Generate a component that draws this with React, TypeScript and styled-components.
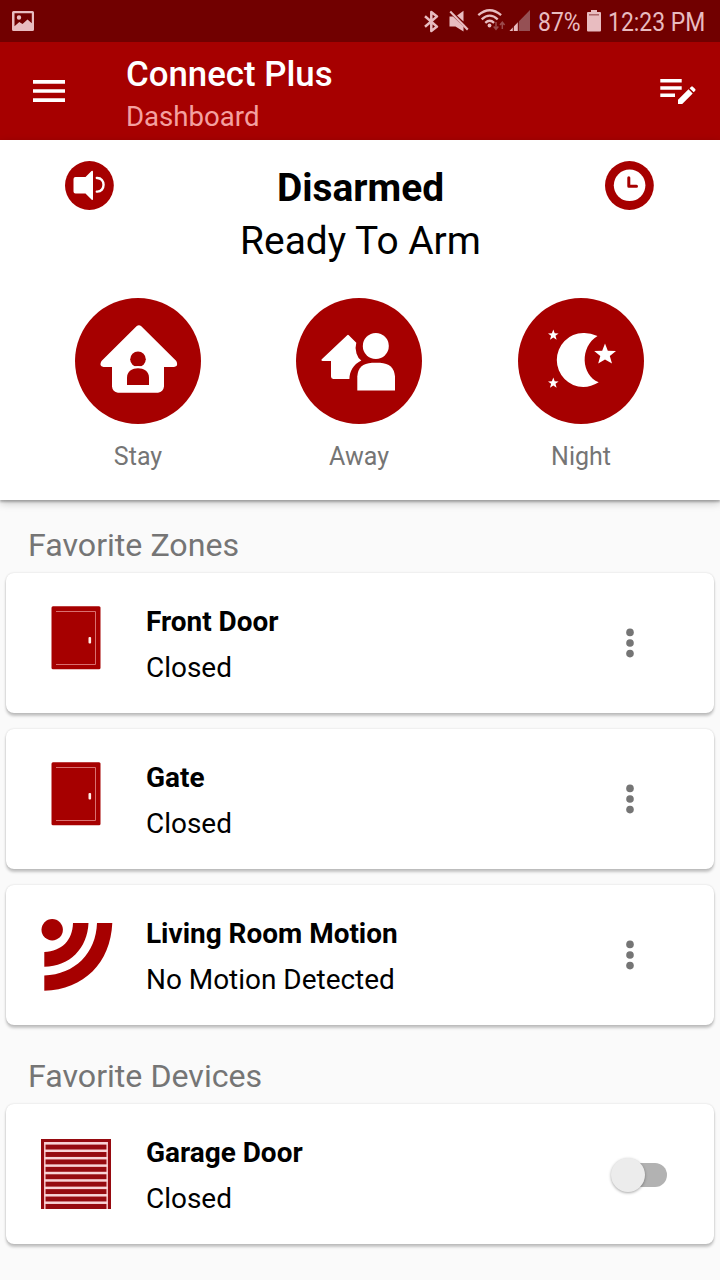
import React from "react";
import styled, { createGlobalStyle } from "styled-components";

const RED = "#a60000";

const GlobalStyle = createGlobalStyle`
  * { box-sizing: border-box; }
  body {
    margin: 0;
    background: #fafafa;
    font-family: Roboto, "Liberation Sans", sans-serif;
    color: #000;
  }
  svg { display: block; flex: none; }
`;

const Screen = styled.div`
  width: 720px;
  height: 1280px;
  overflow: hidden;
  display: flex;
  flex-direction: column;
`;

const StatusBar = styled.div`
  height: 42px;
  flex: none;
  display: flex;
  align-items: center;
  padding: 0 14px 0 12px;
  background: #710000;
`;

const StatusIcons = styled.div`
  display: flex;
  align-items: center;
  margin-left: auto;
`;

const StatusText = styled.span<{ $width: number }>`
  width: ${(p) => p.$width}px;
  font-size: 26px;
  line-height: 42px;
  white-space: nowrap;
  color: #e8bcc0;
  transform: translateY(1px) scaleX(0.882);
  transform-origin: left center;
`;

const AppBar = styled.header`
  height: 98px;
  flex: none;
  display: flex;
  align-items: center;
  padding: 0 24px 0 33px;
  background: ${RED};
`;

const Titles = styled.div`
  margin-left: 61px;
  flex: 1;
  padding-top: 9px;
`;

const Title = styled.h1`
  margin: 0;
  font-size: 34.8px;
  line-height: 41px;
  font-weight: 500;
  color: #fff;
`;

const Subtitle = styled.div`
  font-size: 27.6px;
  line-height: 43px;
  color: #f4a0a0;
`;

const Panel = styled.section`
  position: relative;
  height: 360px;
  flex: none;
  background: #fff;
  box-shadow: 0 2px 2px rgba(0, 0, 0, 0.24), 0 3px 8px rgba(0, 0, 0, 0.22);
`;

const StateRow = styled.div`
  display: flex;
  justify-content: space-between;
  align-items: flex-start;
  height: 158px;
  padding: 21px 66px 0 65px;
`;

const StateText = styled.div`
  padding-left: 2px;
  text-align: center;
  font-size: 38.9px;
  line-height: 53px;
`;

const Strong = styled.div`
  font-weight: 700;
`;

const Modes = styled.div`
  display: flex;
  gap: 95px;
  padding-left: 75px;
`;

const Mode = styled.div`
  width: 126px;
  display: flex;
  flex-direction: column;
  align-items: center;
  gap: 18px;

  &:last-child {
    margin-left: 1px;
  }
`;

const ModeLabel = styled.span`
  font-size: 25px;
  line-height: 30px;
  color: #757575;
`;

const SectionTitle = styled.h2<{ $top: number; $gap: number }>`
  margin: ${(p) => p.$top}px 0 ${(p) => p.$gap}px 28px;
  font-size: 32.15px;
  line-height: 38px;
  font-weight: 400;
  color: #757575;
`;

const CardList = styled.div`
  display: flex;
  flex-direction: column;
  gap: 16px;
  padding: 0 6px;
`;

const Card = styled.article`
  height: 140px;
  display: flex;
  padding-right: 46px;
  background: #fff;
  border-radius: 8px;
  box-shadow: 0 0 2px rgba(0, 0, 0, 0.16), 0 3px 3px rgba(0, 0, 0, 0.22);
`;

const CardIcon = styled.div`
  width: 140px;
  flex: none;
`;

const CardBody = styled.div`
  flex: 1;
  padding-top: 26px;
  font-size: 27.95px;
  line-height: 46px;
`;

const CardAction = styled.div`
  width: 76px;
  display: flex;
  align-items: center;
  justify-content: center;
`;

const Switch = styled.div`
  width: 57px;
  height: 36px;
  display: flex;
  align-items: center;
  margin-top: 2px;
  margin-right: -17px;
`;

const Thumb = styled.div`
  position: relative;
  width: 34px;
  height: 34px;
  margin-left: 1px;
  border-radius: 50%;
  background: #ececec;
  box-shadow: 0 1px 3px rgba(0, 0, 0, 0.35);
`;

const Track = styled.div`
  width: 40px;
  height: 24px;
  margin-left: -18px;
  border-radius: 12px;
  background: #b2b2b2;
`;

const TINT = "#e8bcc0";

const PhotoIcon = () => (
  <svg width="22" height="20" viewBox="0 0 22 20">
    <path
      fill={TINT}
      fillRule="evenodd"
      d="M1.5 0H20.5Q22 0 22 1.5V18.5Q22 20 20.5 20H1.5Q0 20 0 18.5V1.5Q0 0 1.5 0ZM2.5 2.2V15.3L7.3 11L10.5 13L15.5 8.5L19.8 12.2V2.2ZM7 4.3A2.2 2.2 0 1 1 7 8.7A2.2 2.2 0 1 1 7 4.3Z"
    />
  </svg>
);

const StatusGlyphs = () => (
  <svg width="108" height="24" viewBox="423 9 108 24">
    <path
      d="M425 16.3L437 26.6L431.3 31V12L437 16.4L425 26.8"
      fill="none"
      stroke={TINT}
      strokeWidth="2.5"
      strokeLinejoin="round"
    />
    <g fill={TINT}>
      <path d="M449.5 16.5H453L463.5 26.5V31.5L455.5 26.5H449.5Z" />
      <path d="M457 15.5L463.5 10.8V21.5Z" />
      <path d="M449.5 12.3L451 10.8L468.5 28.8L467 30.5Z" />
    </g>
    <g fill="none" stroke={TINT} strokeWidth="2.3">
      <path d="M478.3 15.2Q489.7 5.4 501.1 15.2" />
      <path d="M481.7 19.3Q489.7 12 497.7 19.3" />
      <path d="M485.3 22.8Q489.7 18.8 494.1 22.8" />
    </g>
    <circle cx="489.5" cy="25.5" r="1.9" fill={TINT} />
    <g fill="none" stroke="#9b4a4c" strokeWidth="1.5">
      <path d="M496 22V29M493.7 26.5L496 29.3L498.3 26.5" />
      <path d="M502.3 29V22.5M500 25L502.3 22.2L504.6 25" />
    </g>
    <path d="M530 10V31H509.5Z" fill="#955054" />
    <path d="M518 22.3V31H509.5Z" fill={TINT} />
    <path d="M513.3 24V31M518.3 20V31" stroke="#710000" strokeWidth="1" />
  </svg>
);

const BatteryIcon = () => (
  <svg width="14" height="22" viewBox="0 0 14 22">
    <path d="M4 0H10V2H13Q14 2 14 3V20.5Q14 21.5 13 21.5H1Q0 21.5 0 20.5V3Q0 2 1 2H4Z" fill={TINT} />
    <path d="M2 4.8H12" stroke="#a65f62" strokeWidth="1.4" />
  </svg>
);

const MenuIcon = () => (
  <svg width="32" height="22" viewBox="0 0 32 22">
    <path d="M0 1.9H32M0 11H32M0 20.1H32" stroke="#fff" strokeWidth="3.6" />
  </svg>
);

const EditNoteIcon = () => (
  <svg width="36" height="26" viewBox="660 79 36 26">
    <path d="M660.3 81.7H681.7M660.3 89H681.7M660.3 96.3H675" stroke="#fff" strokeWidth="3.5" />
    <path
      fill="#fff"
      d="M678 105V100.8L688.5 90.3L692.7 94.5L682.2 105ZM689.6 89.2L691.2 87.7Q692 87 692.8 87.7L695.2 90.1Q695.9 90.9 695.2 91.7L693.7 93.3Z"
    />
  </svg>
);

const SoundIcon = () => (
  <svg width="49" height="49" viewBox="65 161 49 49">
    <circle cx="89.4" cy="185.5" r="24.4" fill={RED} />
    <path
      fill="#fff"
      d="M75.5 177H85.5L91.5 171Q93 170 93 172V198.5Q93 201 91.5 199.5L85.5 193.5H75.5Q73.5 193.5 73.5 191.5V179Q73.5 177 75.5 177Z"
    />
    <path
      d="M96.8 178C105.8 177.5 105.8 192.2 96.8 191.6"
      fill="none"
      stroke="#fff"
      strokeWidth="2.4"
      strokeLinecap="round"
    />
  </svg>
);

const ClockIcon = () => (
  <svg width="49" height="49" viewBox="605 161 49 49">
    <circle cx="629.4" cy="185.5" r="24.4" fill={RED} />
    <circle cx="629.6" cy="185.3" r="15.8" fill="#fff" />
    <path
      d="M628.8 177.8V186.3H636.5"
      fill="none"
      stroke={RED}
      strokeWidth="3"
      strokeLinecap="round"
      strokeLinejoin="round"
    />
  </svg>
);

const StayIcon = () => (
  <svg width="126" height="126" viewBox="75 298 126 126">
    <circle cx="138" cy="361" r="63" fill={RED} />
    <path
      fill="#fff"
      d="M136.5 326.3Q139 324.3 141.3 326.3L176.3 361Q179 366.3 174 367H164V386.5Q163.3 392 158 392.7H118Q112.5 392 112 386.5V367H103.5Q98.5 366 101.5 361Z"
    />
    <circle cx="138" cy="359.3" r="7.8" fill={RED} />
    <path fill={RED} d="M127 385V377.5C127 365.3 149 365.3 149 377.5V385Z" />
    <path d="M131.5 368Q138 365.5 144.5 368" fill="none" stroke="#fff" strokeWidth="1.5" />
  </svg>
);

const AwayIcon = () => (
  <svg width="126" height="126" viewBox="296 298 126 126">
    <circle cx="359" cy="361" r="63" fill={RED} />
    <path
      fill="#fff"
      d="M347.2 335.2L321.5 359.5Q321 361 323 361H331V376.5Q331 378.7 333.3 379H349.4C349.6 371.5 353 364.5 361.3 360.5Q357.8 358 356.5 353.5Q354.7 348 356.3 342.8L348.8 335.2Q348 334.3 347.2 335.2Z"
    />
    <circle cx="375.8" cy="346" r="13" fill="#fff" />
    <path
      fill="#fff"
      d="M357.3 390.6V376.5Q358 363.5 372 362.7H380Q394 363.5 395 376.5V390.6Z"
    />
  </svg>
);

const NightIcon = () => (
  <svg width="126" height="126" viewBox="518 298 126 126">
    <circle cx="581" cy="361" r="63" fill={RED} />
    <path
      fill="#fff"
      d="M597.5 336Q590 332.7 583.3 333A26.5 27 0 0 0 583.3 387Q591 387 598.7 382.3C581 375 579.5 347 597.5 336Z"
    />
    <path
      fill="#fff"
      d="M605 343.5L607.8 350.7L616 351L609.8 356L612 363.5L605 359.4L598.2 363.5L600.3 356L594.2 351L602.2 350.7Z"
    />
    <g fill="#fff">
      <path
        id="small-star"
        d="M553.3 329.5L554.7 333.2L558.6 333.4L555.5 335.8L556.6 339.7L553.3 337.5L550 339.7L551.1 335.8L548 333.4L551.9 333.2Z"
      />
      <use href="#small-star" y="48" />
    </g>
  </svg>
);

const DoorIcon = () => (
  <svg width="140" height="140" viewBox="6 573 140 140">
    <rect x="51.5" y="606.3" width="49" height="63" rx="1.5" fill={RED} />
    <path d="M56 611.5H95.5V664.5H56" fill="none" stroke="#d97070" strokeWidth="1" />
    <rect x="88.5" y="637" width="2.6" height="6.6" rx="1" fill="#fff0e8" />
  </svg>
);

const MotionIcon = () => (
  <svg width="140" height="140" viewBox="6 885 140 140">
    <circle cx="52.2" cy="929.8" r="10.7" fill={RED} />
    <g fill={RED}>
      <path d="M73 923H88.5C87.5 948 70 966.5 44.3 966.8V952C62 951 72.5 940.5 73 923Z" />
      <path d="M97 923H112.3C110.5 963 84 989.5 44.3 990.8V975.5C75 974.5 96 953 97 923Z" />
    </g>
  </svg>
);

const GarageIcon = () => (
  <svg width="140" height="140" viewBox="6 1104 140 140">
    <rect x="41" y="1139" width="70" height="70" fill="#960a10" />
    <path d="M44.8 1209V1142.9H107.2V1209" fill="none" stroke="#f3b9bd" strokeWidth="1.6" />
    {[0, 1, 2, 3, 4, 5, 6, 7, 8].map((i) => (
      <rect key={i} x="44.5" y={1142.1 + i * 7.42} width="63" height="2.5" fill="#f8d3d6" />
    ))}
  </svg>
);

const MoreIcon = () => (
  <svg width="8" height="30" viewBox="0 0 8 30" fill="#757575">
    <circle cx="4" cy="4.4" r="3.8" />
    <circle cx="4" cy="15" r="3.8" />
    <circle cx="4" cy="25.6" r="3.8" />
  </svg>
);

const modes = [
  { label: "Stay", icon: <StayIcon /> },
  { label: "Away", icon: <AwayIcon /> },
  { label: "Night", icon: <NightIcon /> },
];

const zones = [
  { name: "Front Door", status: "Closed", icon: <DoorIcon /> },
  { name: "Gate", status: "Closed", icon: <DoorIcon /> },
  { name: "Living Room Motion", status: "No Motion Detected", icon: <MotionIcon /> },
];

interface ItemCardProps {
  name: string;
  status: string;
  icon: React.ReactNode;
  children: React.ReactNode;
}

const ItemCard = ({ name, status, icon, children }: ItemCardProps) => (
  <Card>
    <CardIcon>{icon}</CardIcon>
    <CardBody>
      <Strong>{name}</Strong>
      <div>{status}</div>
    </CardBody>
    <CardAction>{children}</CardAction>
  </Card>
);

const BatteryGap = styled.div`
  margin: 0 7px 0 6px;
`;

const GlyphGap = styled.div`
  margin-right: 7px;
`;

export default function App() {
  return (
    <Screen>
      <GlobalStyle />
      <StatusBar>
        <PhotoIcon />
        <StatusIcons>
          <GlyphGap>
            <StatusGlyphs />
          </GlyphGap>
          <StatusText $width={43}>87%</StatusText>
          <BatteryGap>
            <BatteryIcon />
          </BatteryGap>
          <StatusText $width={98}>12:23 PM</StatusText>
        </StatusIcons>
      </StatusBar>
      <AppBar>
        <MenuIcon />
        <Titles>
          <Title>Connect Plus</Title>
          <Subtitle>Dashboard</Subtitle>
        </Titles>
        <EditNoteIcon />
      </AppBar>
      <Panel>
        <StateRow>
          <SoundIcon />
          <StateText>
            <Strong>Disarmed</Strong>
            <div>Ready To Arm</div>
          </StateText>
          <ClockIcon />
        </StateRow>
        <Modes>
          {modes.map((m) => (
            <Mode key={m.label}>
              {m.icon}
              <ModeLabel>{m.label}</ModeLabel>
            </Mode>
          ))}
        </Modes>
      </Panel>
      <SectionTitle $top={26} $gap={9}>Favorite Zones</SectionTitle>
      <CardList>
        {zones.map((z) => (
          <ItemCard key={z.name} {...z}>
            <MoreIcon />
          </ItemCard>
        ))}
      </CardList>
      <SectionTitle $top={32} $gap={9}>Favorite Devices</SectionTitle>
      <CardList>
        <ItemCard name="Garage Door" status="Closed" icon={<GarageIcon />}>
          <Switch>
            <Thumb />
            <Track />
          </Switch>
        </ItemCard>
      </CardList>
    </Screen>
  );
}
